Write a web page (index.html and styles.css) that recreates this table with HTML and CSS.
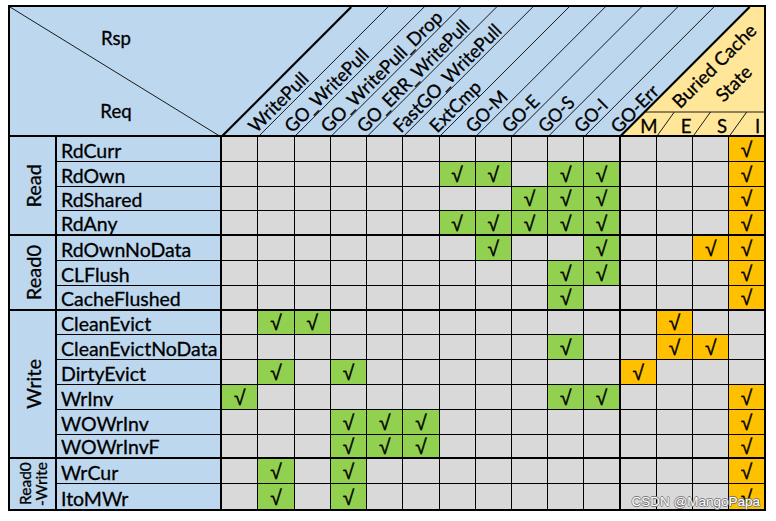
FILE: index.html
```html
<!DOCTYPE html>
<html>
<head>
<meta charset="utf-8">
<link rel="stylesheet" href="styles.css">
</head>
<body>
<div class="sheet">
  <svg class="head" viewBox="10 7 754 130" width="754" height="130" xmlns="http://www.w3.org/2000/svg">
    <rect x="10" y="7" width="754" height="130" fill="#BDD7EE"/>
    <polygon points="619.6,137 749.6,7 764,7 764,137" fill="#FFE699"/>
    <line x1="10" y1="7" x2="221.2" y2="137" class="ln"/>
    <line x1="257.92" y1="137" x2="387.92" y2="7" class="ln"/>
    <line x1="294.14" y1="137" x2="424.14" y2="7" class="ln"/>
    <line x1="330.36" y1="137" x2="460.36" y2="7" class="ln"/>
    <line x1="366.58" y1="137" x2="496.58" y2="7" class="ln"/>
    <line x1="402.8" y1="137" x2="532.8" y2="7" class="ln"/>
    <line x1="439.02" y1="137" x2="569.02" y2="7" class="ln"/>
    <line x1="475.24" y1="137" x2="605.24" y2="7" class="ln"/>
    <line x1="511.46" y1="137" x2="641.46" y2="7" class="ln"/>
    <line x1="547.68" y1="137" x2="677.68" y2="7" class="ln"/>
    <line x1="583.9" y1="137" x2="713.9" y2="7" class="ln"/>
    <line x1="644.6" y1="112" x2="764" y2="112" class="ln"/>
    <line x1="656.34" y1="137" x2="674.3" y2="112" class="ln"/>
    <line x1="692.56" y1="137" x2="710.5" y2="112" class="ln"/>
    <line x1="728.78" y1="137" x2="746.7" y2="112" class="ln"/>
    <line x1="221.2" y1="137" x2="351.2" y2="7" class="lt"/>
    <line x1="619.6" y1="137" x2="749.6" y2="7" class="lt"/>
    <rect x="10" y="135" width="754" height="2" fill="#000"/>
    <text class="ht" x="116" y="44.5" text-anchor="middle">Rsp</text>
    <text class="ht" x="116" y="118.3" text-anchor="middle">Req</text>
    <text class="ht" x="256.15" y="133.8" textLength="76" lengthAdjust="spacingAndGlyphs" transform="rotate(-45 256.15 133.8)">WritePull</text>
    <text class="ht" x="292.37" y="133.8" textLength="110" lengthAdjust="spacingAndGlyphs" transform="rotate(-45 292.37 133.8)">GO_WritePull</text>
    <text class="ht" x="328.59" y="133.8" textLength="163" lengthAdjust="spacingAndGlyphs" transform="rotate(-45 328.59 133.8)">GO_WritePull_Drop</text>
    <text class="ht" x="364.81" y="133.8" textLength="150" lengthAdjust="spacingAndGlyphs" transform="rotate(-45 364.81 133.8)">GO_ERR_WritePull</text>
    <text class="ht" x="401.03" y="133.8" textLength="144" lengthAdjust="spacingAndGlyphs" transform="rotate(-45 401.03 133.8)">FastGO_WritePull</text>
    <text class="ht" x="437.25" y="133.8" textLength="64" lengthAdjust="spacingAndGlyphs" transform="rotate(-45 437.25 133.8)">ExtCmp</text>
    <text class="ht" x="473.47" y="133.8" textLength="50" lengthAdjust="spacingAndGlyphs" transform="rotate(-45 473.47 133.8)">GO-M</text>
    <text class="ht" x="509.69" y="133.8" textLength="44" lengthAdjust="spacingAndGlyphs" transform="rotate(-45 509.69 133.8)">GO-E</text>
    <text class="ht" x="545.91" y="133.8" textLength="42.5" lengthAdjust="spacingAndGlyphs" transform="rotate(-45 545.91 133.8)">GO-S</text>
    <text class="ht" x="582.13" y="133.8" textLength="38.5" lengthAdjust="spacingAndGlyphs" transform="rotate(-45 582.13 133.8)">GO-I</text>
    <text class="ht" x="618.5" y="134.2" textLength="59" lengthAdjust="spacingAndGlyphs" transform="rotate(-45 618.5 134.2)">GO-Err</text>
    <text class="ht" x="680" y="109.5" textLength="110" lengthAdjust="spacingAndGlyphs" transform="rotate(-45 680 109.5)">Buried Cache</text>
    <text class="ht" x="723.5" y="103" textLength="42" lengthAdjust="spacingAndGlyphs" transform="rotate(-45 723.5 103)">State</text>
    <text class="ht" x="649" y="133.3" text-anchor="middle">M</text>
    <text class="ht" x="686" y="133.3" text-anchor="middle">E</text>
    <text class="ht" x="722" y="133.3" text-anchor="middle">S</text>
    <text class="ht" x="757.5" y="133.3" text-anchor="middle">I</text>
  </svg>

  <div class="grid">
    <div class="grp s4"><span class="vt">Read</span></div>
    <div class="row">
      <div class="nm">RdCurr</div>
      <div class="c"></div><div class="c"></div><div class="c"></div><div class="c"></div><div class="c"></div><div class="c"></div><div class="c"></div><div class="c"></div><div class="c"></div><div class="c"></div><div class="c"></div><div class="c"></div><div class="c"></div><div class="c"></div><div class="c o">√</div>
    </div>
    <div class="row">
      <div class="nm">RdOwn</div>
      <div class="c"></div><div class="c"></div><div class="c"></div><div class="c"></div><div class="c"></div><div class="c"></div><div class="c g">√</div><div class="c g">√</div><div class="c"></div><div class="c g">√</div><div class="c g">√</div><div class="c"></div><div class="c"></div><div class="c"></div><div class="c o">√</div>
    </div>
    <div class="row">
      <div class="nm">RdShared</div>
      <div class="c"></div><div class="c"></div><div class="c"></div><div class="c"></div><div class="c"></div><div class="c"></div><div class="c"></div><div class="c"></div><div class="c g">√</div><div class="c g">√</div><div class="c g">√</div><div class="c"></div><div class="c"></div><div class="c"></div><div class="c o">√</div>
    </div>
    <div class="row tb">
      <div class="nm">RdAny</div>
      <div class="c"></div><div class="c"></div><div class="c"></div><div class="c"></div><div class="c"></div><div class="c"></div><div class="c g">√</div><div class="c g">√</div><div class="c g">√</div><div class="c g">√</div><div class="c g">√</div><div class="c"></div><div class="c"></div><div class="c"></div><div class="c o">√</div>
    </div>

    <div class="grp s3"><span class="vt">Read0</span></div>
    <div class="row">
      <div class="nm">RdOwnNoData</div>
      <div class="c"></div><div class="c"></div><div class="c"></div><div class="c"></div><div class="c"></div><div class="c"></div><div class="c"></div><div class="c g">√</div><div class="c"></div><div class="c"></div><div class="c g">√</div><div class="c"></div><div class="c"></div><div class="c o">√</div><div class="c o">√</div>
    </div>
    <div class="row">
      <div class="nm">CLFlush</div>
      <div class="c"></div><div class="c"></div><div class="c"></div><div class="c"></div><div class="c"></div><div class="c"></div><div class="c"></div><div class="c"></div><div class="c"></div><div class="c g">√</div><div class="c g">√</div><div class="c"></div><div class="c"></div><div class="c"></div><div class="c o">√</div>
    </div>
    <div class="row tb">
      <div class="nm">CacheFlushed</div>
      <div class="c"></div><div class="c"></div><div class="c"></div><div class="c"></div><div class="c"></div><div class="c"></div><div class="c"></div><div class="c"></div><div class="c"></div><div class="c g">√</div><div class="c"></div><div class="c"></div><div class="c"></div><div class="c"></div><div class="c o">√</div>
    </div>

    <div class="grp s6"><span class="vt">Write</span></div>
    <div class="row">
      <div class="nm">CleanEvict</div>
      <div class="c"></div><div class="c g">√</div><div class="c g">√</div><div class="c"></div><div class="c"></div><div class="c"></div><div class="c"></div><div class="c"></div><div class="c"></div><div class="c"></div><div class="c"></div><div class="c"></div><div class="c o">√</div><div class="c"></div><div class="c"></div>
    </div>
    <div class="row">
      <div class="nm">CleanEvictNoData</div>
      <div class="c"></div><div class="c"></div><div class="c"></div><div class="c"></div><div class="c"></div><div class="c"></div><div class="c"></div><div class="c"></div><div class="c"></div><div class="c g">√</div><div class="c"></div><div class="c"></div><div class="c o">√</div><div class="c o">√</div><div class="c"></div>
    </div>
    <div class="row">
      <div class="nm">DirtyEvict</div>
      <div class="c"></div><div class="c g">√</div><div class="c"></div><div class="c g">√</div><div class="c"></div><div class="c"></div><div class="c"></div><div class="c"></div><div class="c"></div><div class="c"></div><div class="c"></div><div class="c o">√</div><div class="c"></div><div class="c"></div><div class="c"></div>
    </div>
    <div class="row">
      <div class="nm">WrInv</div>
      <div class="c g">√</div><div class="c"></div><div class="c"></div><div class="c"></div><div class="c"></div><div class="c"></div><div class="c"></div><div class="c"></div><div class="c"></div><div class="c g">√</div><div class="c g">√</div><div class="c"></div><div class="c"></div><div class="c"></div><div class="c o">√</div>
    </div>
    <div class="row">
      <div class="nm">WOWrInv</div>
      <div class="c"></div><div class="c"></div><div class="c"></div><div class="c g">√</div><div class="c g">√</div><div class="c g">√</div><div class="c"></div><div class="c"></div><div class="c"></div><div class="c"></div><div class="c"></div><div class="c"></div><div class="c"></div><div class="c"></div><div class="c o">√</div>
    </div>
    <div class="row tb">
      <div class="nm">WOWrInvF</div>
      <div class="c"></div><div class="c"></div><div class="c"></div><div class="c g">√</div><div class="c g">√</div><div class="c g">√</div><div class="c"></div><div class="c"></div><div class="c"></div><div class="c"></div><div class="c"></div><div class="c"></div><div class="c"></div><div class="c"></div><div class="c o">√</div>
    </div>

    <div class="grp s2 last"><span class="vt sm">Read0<br>-Write</span></div>
    <div class="row">
      <div class="nm">WrCur</div>
      <div class="c"></div><div class="c g">√</div><div class="c"></div><div class="c g">√</div><div class="c"></div><div class="c"></div><div class="c"></div><div class="c"></div><div class="c"></div><div class="c"></div><div class="c"></div><div class="c"></div><div class="c"></div><div class="c"></div><div class="c o">√</div>
    </div>
    <div class="row end">
      <div class="nm">ItoMWr</div>
      <div class="c"></div><div class="c g">√</div><div class="c"></div><div class="c g">√</div><div class="c"></div><div class="c"></div><div class="c"></div><div class="c"></div><div class="c"></div><div class="c"></div><div class="c"></div><div class="c"></div><div class="c"></div><div class="c"></div><div class="c o">√</div>
    </div>
  </div>

  <div class="wm">CSDN @MangoPapa</div>
</div>
</body>
</html>
```

FILE: styles.css
```css
body {
  margin: 0;
  background: #fff;
}

.sheet {
  position: relative;
  margin: 5px 0 0 8px;
  width: 758px;
  height: 506px;
  box-sizing: border-box;
  border: 2px solid #000;
  display: flex;
  flex-direction: column;
  font-family: Lato, "Liberation Sans", sans-serif;
  color: #000;
}

.head {
  display: block;
  flex: none;
  width: 754px;
  height: 130px;
}

.ln {
  stroke: #1a1a1a;
  stroke-width: 1;
}

.lt {
  stroke: #000;
  stroke-width: 2.2;
}

.ht {
  font-family: Lato, "Liberation Sans", sans-serif;
  font-size: 18.6px;
  fill: #000;
  stroke: #000;
  stroke-width: 0.3px;
}

.grid {
  flex: 1;
  min-height: 0;
  display: grid;
  grid-template-columns: 47px 165.2px repeat(14, 36.22px) 1fr;
  grid-template-rows: repeat(15, minmax(0, 1fr));
}

.row {
  display: contents;
}

.grp,
.nm,
.c {
  box-sizing: border-box;
  border-right: 1px solid #000;
  border-bottom: 1px solid #000;
  min-width: 0;
  min-height: 0;
  overflow: hidden;
}

.grp {
  grid-column: 1;
  background: #BDD7EE;
  border-right-width: 2px;
  border-bottom-width: 2px;
  display: flex;
  align-items: center;
  justify-content: center;
}

.grp.last {
  border-bottom: 0;
}

.s2 { grid-row: span 2; }
.s3 { grid-row: span 3; }
.s4 { grid-row: span 4; }
.s6 { grid-row: span 6; }

.vt {
  writing-mode: vertical-rl;
  transform: rotate(180deg);
  font-size: 20px;
  line-height: 20px;
  white-space: nowrap;
  -webkit-text-stroke: 0.3px #000;
}

.vt.sm {
  font-size: 15.5px;
  line-height: 16px;
  text-align: center;
}

.nm {
  grid-column: 2;
  background: #BDD7EE;
  border-right-width: 2px;
  font-size: 19.5px;
  line-height: 20px;
  padding-left: 4px;
  display: flex;
  align-items: flex-end;
  white-space: nowrap;
  -webkit-text-stroke: 0.3px #000;
}

.c {
  background: #D9D9D9;
  display: flex;
  align-items: center;
  justify-content: center;
  font-family: "Liberation Sans", sans-serif;
  font-size: 21px;
  line-height: 20px;
  padding-top: 2px;
  -webkit-text-stroke: 0.4px #000;
}

.c.g { background: #92D050; }
.c.o { background: #FFC000; }

.row > :nth-child(12) { border-right-width: 2px; }
.row > :last-child { border-right: 0; }
.tb > * { border-bottom-width: 2px; }
.row.end > * { border-bottom: 0; }

.wm {
  position: absolute;
  right: 4px;
  bottom: 0;
  font-family: "Liberation Sans", Arial, sans-serif;
  font-size: 13.5px;
  line-height: 14px;
  color: #fff;
  text-shadow: 0.7px 0 #777, -0.7px 0 #777, 0 0.7px #777, 0 -0.7px #777;
  white-space: nowrap;
}
```
